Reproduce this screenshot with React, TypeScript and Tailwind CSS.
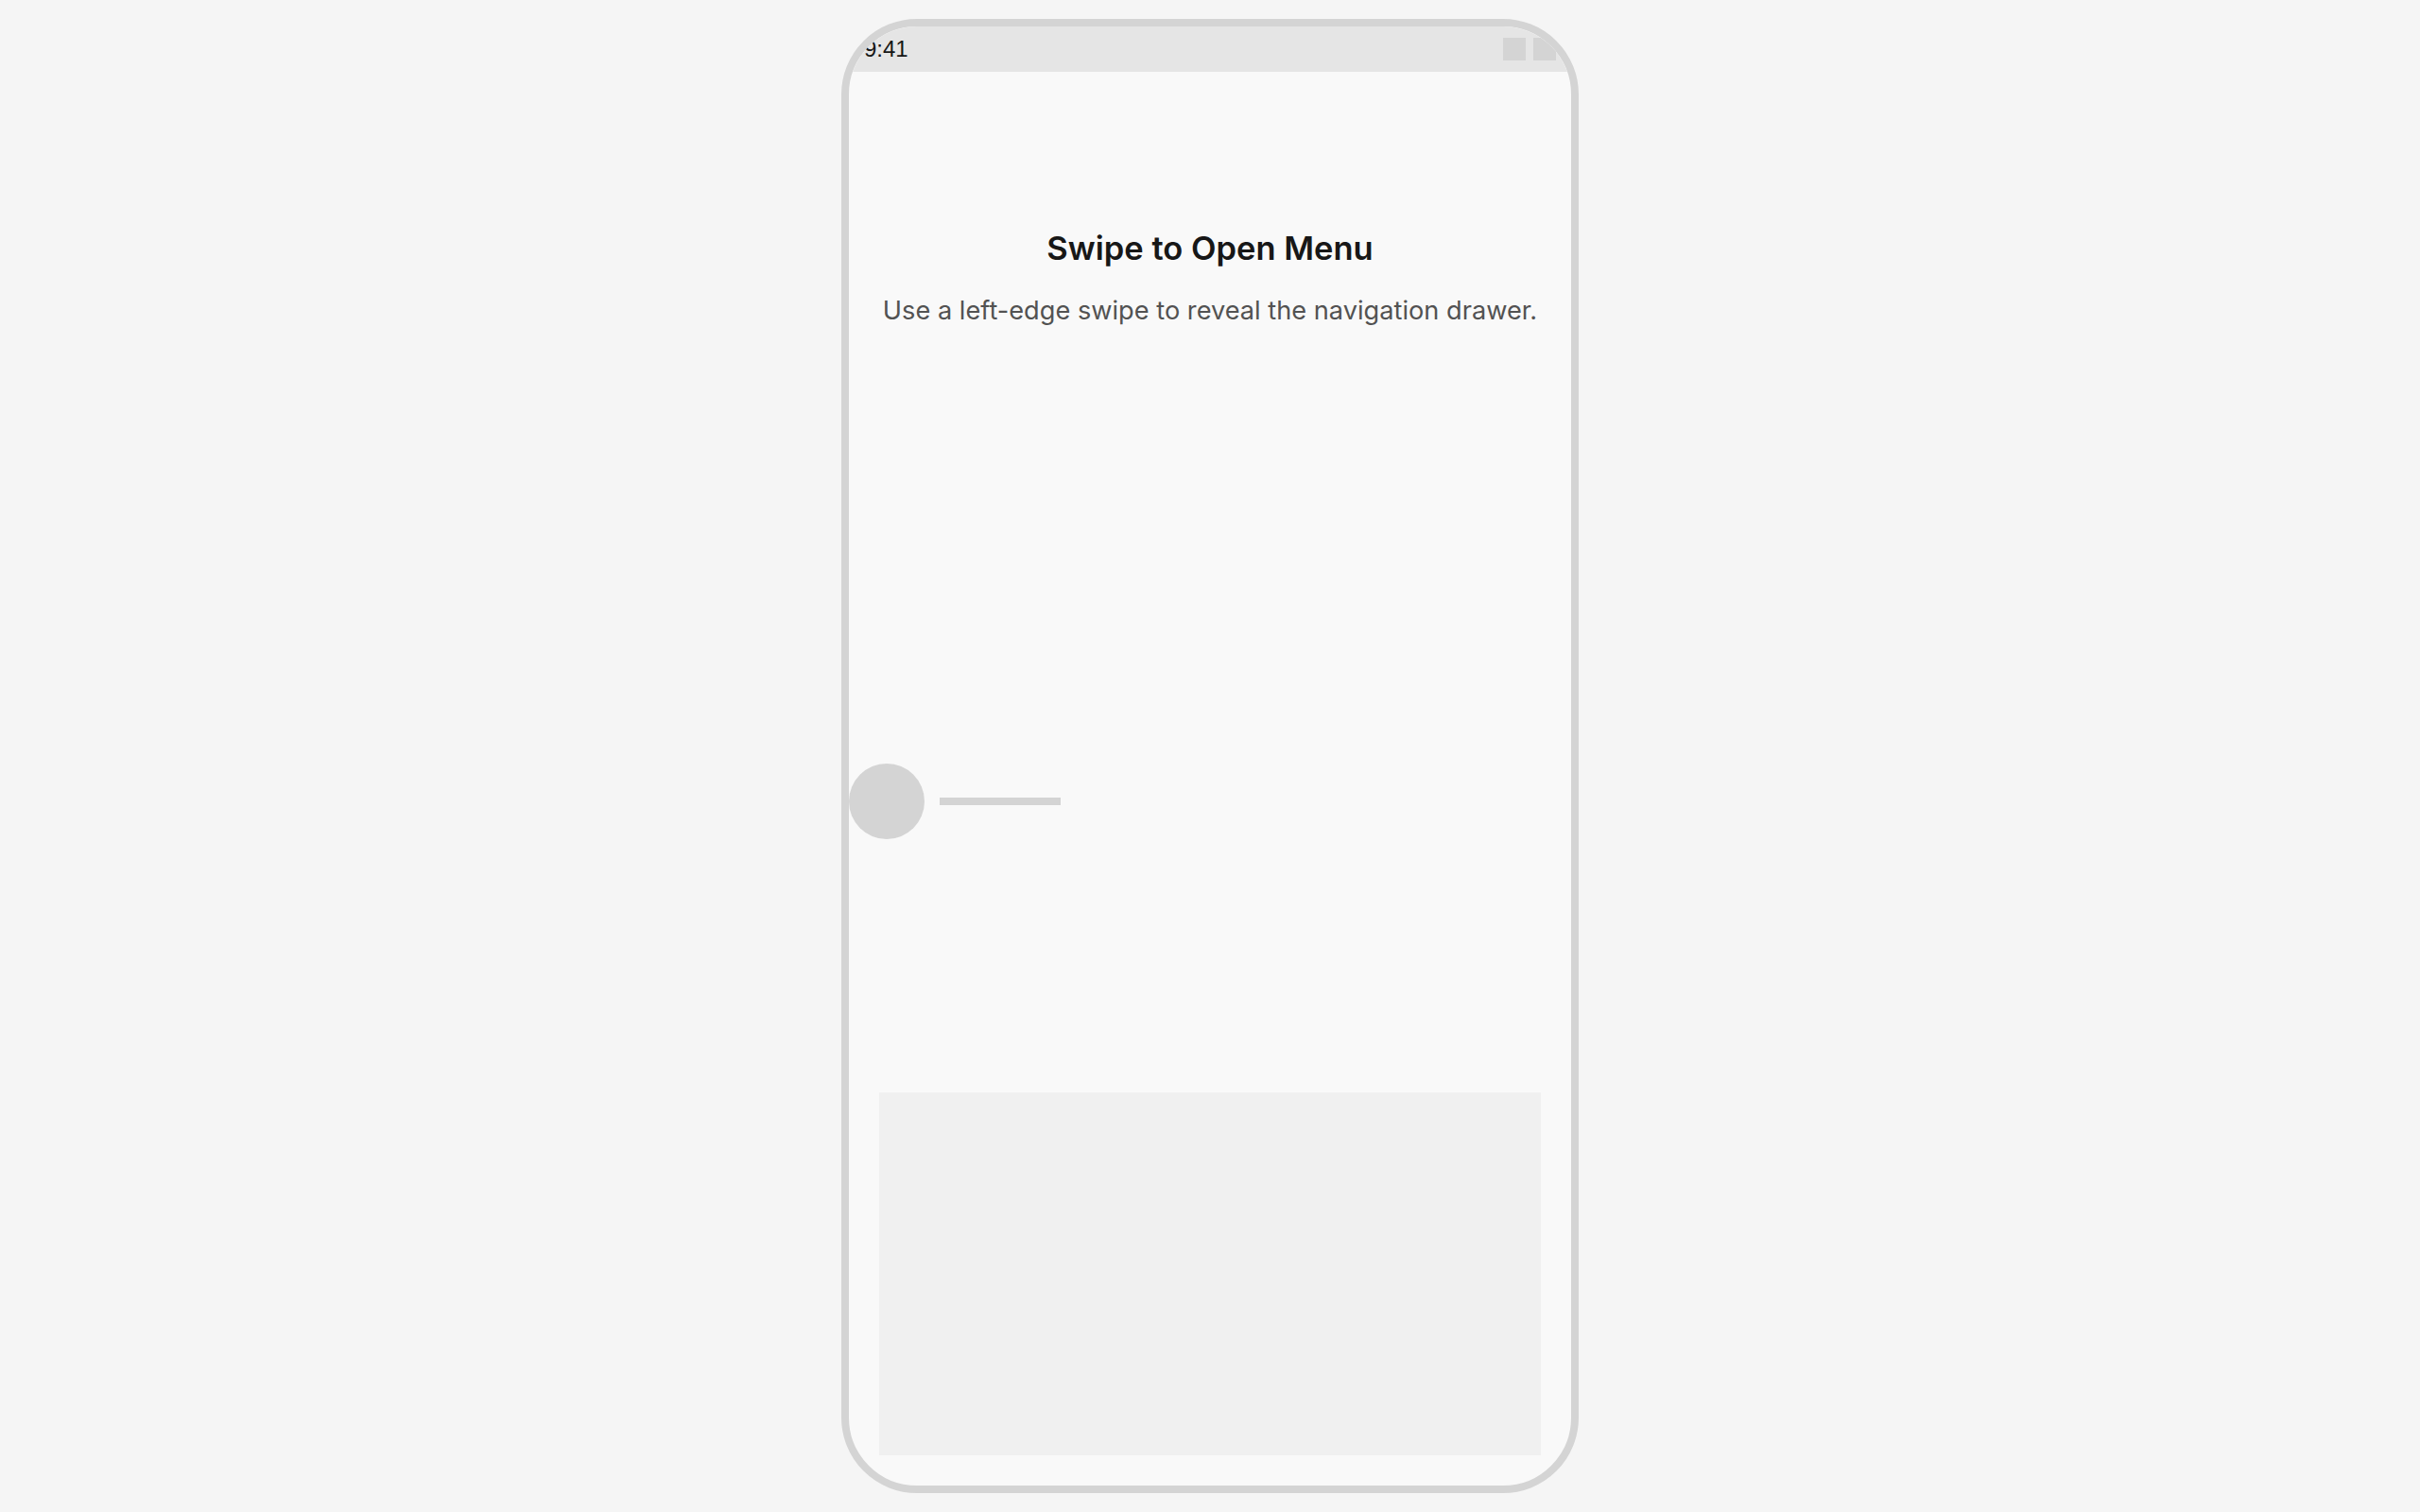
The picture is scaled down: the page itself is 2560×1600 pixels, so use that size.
import React from "react";

export default function App() {
  return (
    <div className="min-h-screen w-full bg-[#f5f5f5] flex items-center justify-center" style={{ fontFamily: "Inter, 'Noto Sans', sans-serif" }}>
      <div className="w-[780px] h-[1560px] border-[8px] border-[#d4d4d4] rounded-[80px] overflow-hidden bg-[#f9f9f9] flex flex-col">
        <div className="h-[48px] shrink-0 bg-[#e5e5e5] flex items-center justify-between px-[16px]">
          <span className="text-[24px] leading-none text-[#171717]" style={{ fontFamily: "'Liberation Sans', Arial, sans-serif" }}>9:41</span>
          <div className="flex items-center gap-[8px]">
            <div className="w-[24px] h-[24px] bg-[#d4d4d4]" />
            <div className="w-[24px] h-[24px] bg-[#d4d4d4]" />
          </div>
        </div>
        <div className="flex-1 flex flex-col">
          <div className="pt-[167px] flex flex-col items-center text-center">
            <h1 className="text-[34.5px] leading-[40px] font-semibold text-[#171717]">Swipe to Open Menu</h1>
            <p className="mt-[28px] text-[27.2px] leading-[36px] text-[#525252]">Use a left-edge swipe to reveal the navigation drawer.</p>
          </div>
          <div className="mt-[461px] flex items-center gap-[16px]">
            <div className="w-[80px] h-[80px] rounded-full bg-[#d4d4d4]" />
            <div className="w-[128px] h-[8px] bg-[#d4d4d4]" />
          </div>
          <div className="mt-auto mx-[32px] mb-[32px] h-[384px] bg-[#f0f0f0]" />
        </div>
      </div>
    </div>
  );
}
